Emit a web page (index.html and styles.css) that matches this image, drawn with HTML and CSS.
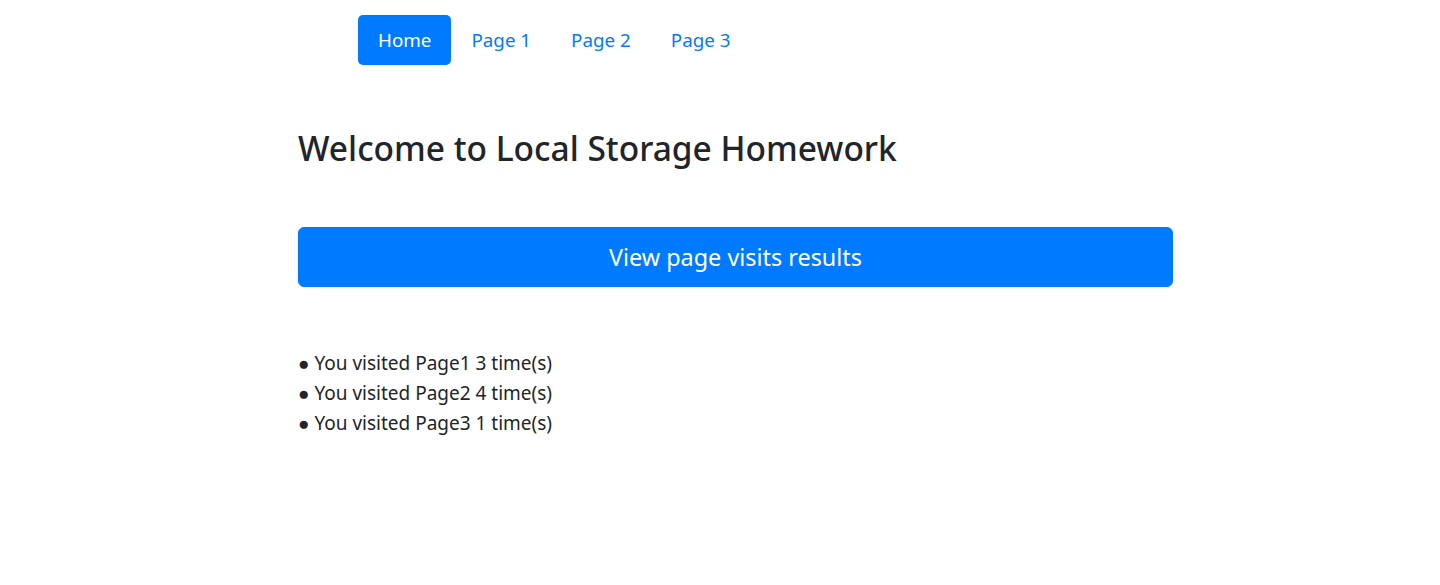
FILE: index.html
```html
<!DOCTYPE html>
<html lang="en">
<head>
<meta charset="utf-8">
<title>Local Storage Homework</title>
<link rel="stylesheet" href="styles.css">
</head>
<body>
<div class="page">
  <nav class="nav">
    <a class="nav-link active" href="#">Home</a>
    <a class="nav-link" href="#">Page 1</a>
    <a class="nav-link" href="#">Page 2</a>
    <a class="nav-link" href="#">Page 3</a>
  </nav>
  <h3 class="title">Welcome to Local Storage Homework</h3>
  <button class="btn-results" type="button">View page visits results</button>
  <div class="results">
    <div class="result">● You visited Page1 3 time(s)</div>
    <div class="result">● You visited Page2 4 time(s)</div>
    <div class="result">● You visited Page3 1 time(s)</div>
  </div>
</div>
</body>
</html>
```
FILE: styles.css
```css
html, body {
  margin: 0;
  padding: 0;
  background: #fff;
}
body {
  font-family: "Noto Sans", "Open Sans", sans-serif;
  font-size: 20px;
  line-height: 1.5;
  color: #212529;
}
.page {
  width: 875px;
  margin-left: 298px;
  display: flex;
  flex-direction: column;
  align-items: stretch;
}
.nav {
  display: flex;
  margin-top: 15px;
  padding-left: 60px;
}
.nav-link {
  display: block;
  padding: 10px 20px;
  line-height: 30px;
  font-size: 18.8px;
  color: #007bff;
  text-decoration: none;
  border-radius: 5px;
}
.nav-link.active {
  background: #007bff;
  color: #fff;
}
.title {
  margin: 62px 0 0 0;
  font-size: 33.5px;
  line-height: 42px;
  font-weight: 500;
}
.btn-results {
  margin-top: 58px;
  height: 60px;
  border: 1px solid #007bff;
  background: #007bff;
  color: #fff;
  font-family: inherit;
  font-size: 23.4px;
  border-radius: 6px;
  padding: 0 20px;
}
.results {
  margin-top: 61px;
}
.result {
  line-height: 30px;
  font-size: 19px;
}
```
